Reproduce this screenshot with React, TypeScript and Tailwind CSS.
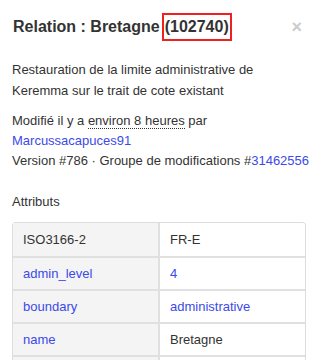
const rows = [
  { k: "ISO3166-2", v: "FR-E", kLink: false, vLink: false },
  { k: "admin_level", v: "4", kLink: true, vLink: true },
  { k: "boundary", v: "administrative", kLink: true, vLink: true },
  { k: "name", v: "Bretagne", kLink: true, vLink: false },
  { k: "name:br", v: "Breizh", kLink: true, vLink: false },
];

export default function App() {
  return (
    <div className="w-[320px] h-[360px] overflow-hidden bg-white text-[#333] font-['Liberation_Sans',Arial,sans-serif]">
      {/* Header */}
      <div className="flex items-center justify-between pl-[13px] pr-[18px] pt-[13px] h-[41px]">
        <h1 className="text-[16px] font-bold leading-[20px] flex items-center">
          <span>Relation : Bretagne</span>
          <span className="ml-[2px] border-2 border-[#f02020] px-[1px] h-[28px] flex items-center">
            (102740)
          </span>
        </h1>
        <button className="text-[#ccc] text-[18px] font-bold leading-none">×</button>
      </div>

      {/* Body */}
      <div className="px-3 text-[13px] leading-[20px]">
        <p className="mt-[18px] leading-[21px]">
          Restauration de la limite administrative de Keremma sur le trait de
          cote existant
        </p>
        <div className="mt-[10px]">
          <div>
            Modifié il y a{" "}
            <span className="border-b border-dotted border-[#333]">environ 8 heures</span>{" "}
            par
          </div>
          <div className="text-[#3b4ae8]">Marcussacapuces91</div>
          <div className="whitespace-nowrap">
            Version #786 · Groupe de modifications #
            <span className="text-[#3b4ae8]">31462556</span>
          </div>
        </div>

        <h2 className="mt-[21px] text-[13px]">Attributs</h2>

        <div className="mt-[10px] w-[294px] border border-[#ddd] rounded-[3px]">
          {rows.map((r, i) => (
            <div
              key={r.k}
              className={`grid grid-cols-[147px_1fr] h-[33px] ${i > 0 ? "border-t-2 border-[#e0e0e0]" : ""}`}
            >
              <div
                className={`bg-[#f4f4f4] border-r-2 border-[#e0e0e0] pl-[10px] flex items-center ${r.kLink ? "text-[#3b4ae8]" : ""}`}
              >
                {r.k}
              </div>
              <div className={`pl-[10px] flex items-center ${r.vLink ? "text-[#3b4ae8]" : ""}`}>
                {r.v}
              </div>
            </div>
          ))}
        </div>
      </div>
    </div>
  );
}
